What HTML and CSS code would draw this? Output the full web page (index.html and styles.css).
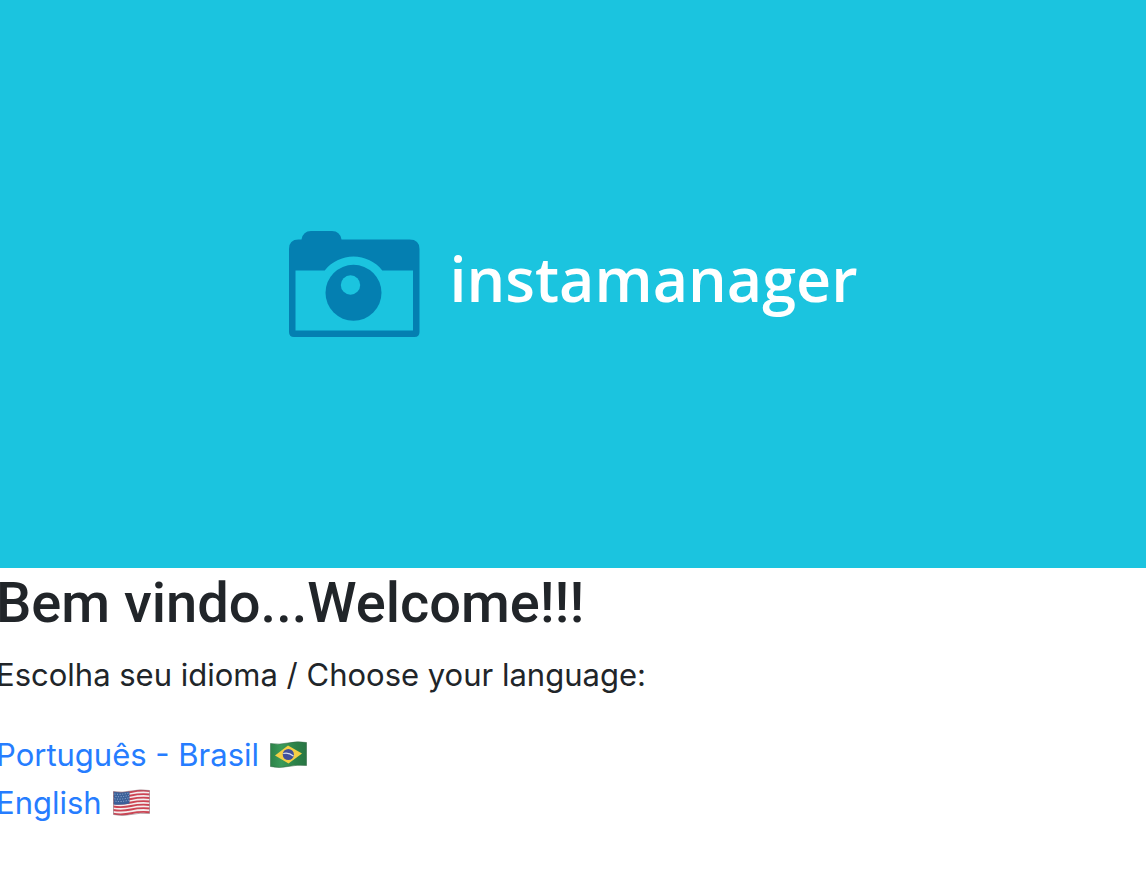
FILE: index.html
```html
<!DOCTYPE html>
<html lang="pt-BR">
<head>
<meta charset="utf-8">
<meta name="viewport" content="width=device-width, initial-scale=1">
<title>instamanager</title>
<link rel="stylesheet" href="styles.css">
</head>
<body>
<header class="hero">
  <svg class="camera" viewBox="0 0 131 106" aria-hidden="true">
    <path fill="#047fb1" fill-rule="evenodd" d="M0 18 Q0 8.5 9.5 8.5 H12.5 Q14 0 22 0 H43 Q51 0 52.5 8.5 H120.500 Q130.500 8.500 130.500 18 V101 Q130.500 106 125.500 106 H5 Q0 106 0 101 Z M6.500 39.500 V99.500 H124 V39.500 H93.300 A36.600 36.600 0 0 0 35.700 39.500 Z"/>
    <circle cx="64.500" cy="61.800" r="28" fill="#047fb1"/>
    <circle cx="61.500" cy="54" r="9.700" fill="#1bc4df"/>
  </svg>
  <span class="brand">instamanager</span>
</header>
<main class="content">
  <h1 class="title">Bem vindo...Welcome!!!</h1>
  <p class="prompt">Escolha seu idioma / Choose your language:</p>
  <nav class="languages">
    <a class="language" href="#pt">Português - Brasil
      <svg class="flag" viewBox="0 0 37 28" aria-hidden="true">
        <defs>
          <linearGradient id="br" x1="0" x2="1"><stop offset="0" stop-color="#2d8249"/><stop offset=".3" stop-color="#3a9a59"/><stop offset=".7" stop-color="#2c8148"/><stop offset="1" stop-color="#287544"/></linearGradient>
        </defs>
        <path fill="url(#br)" stroke="#356b48" stroke-width=".6" d="M.5 2.500 Q9 4 18 2 T36.500 1.500 V24.500 Q27 23.500 18 25.500 T.5 25.500 Z"/>
        <path fill="#f4cf45" d="M5 14.500 L18 4.500 L32 12.500 L18.500 22.500 Z"/>
        <circle cx="18.300" cy="13.500" r="5.600" fill="#40509a"/>
        <path fill="none" stroke="#d9e0ee" stroke-width="1.200" d="M13.200 12.500 Q18.500 11 23.400 15"/>
      </svg></a>
    <a class="language" href="#en">English
      <svg class="flag" viewBox="0 0 37 28" aria-hidden="true">
        <defs>
          <clipPath id="us"><path d="M.5 2.500 Q9 4 18 2 T36.500 1.500 V24.500 Q27 23.500 18 25.500 T.5 25.500 Z"/></clipPath>
        </defs>
        <g clip-path="url(#us)">
          <path fill="#f4eeee" d="M0 0 H37 V28 H0 Z"/>
          <g fill="none" stroke="#cc4453" stroke-width="1.900">
            <path d="M0 3.500 Q9 5 18 3 T37 2"/>
            <path d="M0 7 Q9 8.500 18 6.500 T37 5.500"/>
            <path d="M0 10.500 Q9 12 18 10 T37 9"/>
            <path d="M0 14 Q9 15.500 18 13.500 T37 12.500"/>
            <path d="M0 17.500 Q9 19 18 17 T37 16"/>
            <path d="M0 21 Q9 22.500 18 20.500 T37 19.500"/>
            <path d="M0 24.700 Q9 26.200 18 24.200 T37 23.200"/>
          </g>
          <path fill="#3b5f98" d="M0 2 Q8 4 16.500 2 V14.500 Q8 16.500 0 15.500 Z"/>
          <g fill="none" stroke="#a9bddb" stroke-width=".9" stroke-dasharray="1 1.600">
            <path d="M1.500 5 Q8 6 16 4"/>
            <path d="M2.500 7.400 Q8 8.400 16 6.400"/>
            <path d="M1.500 9.800 Q8 10.800 16 8.800"/>
            <path d="M2.500 12.200 Q8 13.200 16 11.200"/>
          </g>
        </g>
        <path fill="none" stroke="#8d6770" stroke-width=".6" d="M.5 2.500 Q9 4 18 2 T36.500 1.500 V24.500 Q27 23.500 18 25.500 T.5 25.500 Z"/>
      </svg></a>
  </nav>
</main>
</body>
</html>
```
FILE: styles.css
```css
* {
  box-sizing: border-box;
}

body {
  margin: 0;
  overflow-x: hidden;
  background: #fff;
  color: #212529;
  font-family: Inter, "Liberation Sans", sans-serif;
  font-size: 31px;
  line-height: 48px;
}

.hero {
  display: flex;
  align-items: center;
  justify-content: center;
  gap: 30px;
  padding: 231px 32px;
  background: #1bc4df;
}

.camera {
  flex: none;
  width: 131px;
  height: 106px;
}

.brand {
  color: #fff;
  font-family: "Open Sans", "Noto Sans", sans-serif;
  font-size: 61px;
  font-weight: 600;
  line-height: 80px;
  padding-bottom: 10px;
}

.content {
  margin-left: -4px;
}

.title {
  margin: 0 0 12px;
  font-family: Roboto, "Liberation Sans", sans-serif;
  font-size: 56px;
  font-weight: 500;
  line-height: 71px;
}

.prompt {
  margin: 0 0 32px;
}

.languages {
  display: flex;
  flex-direction: column;
  align-items: flex-start;
}

.language {
  display: flex;
  align-items: center;
  gap: 11px;
  color: #267dff;
  text-decoration: none;
}

.flag {
  width: 37px;
  height: 28px;
}
```
